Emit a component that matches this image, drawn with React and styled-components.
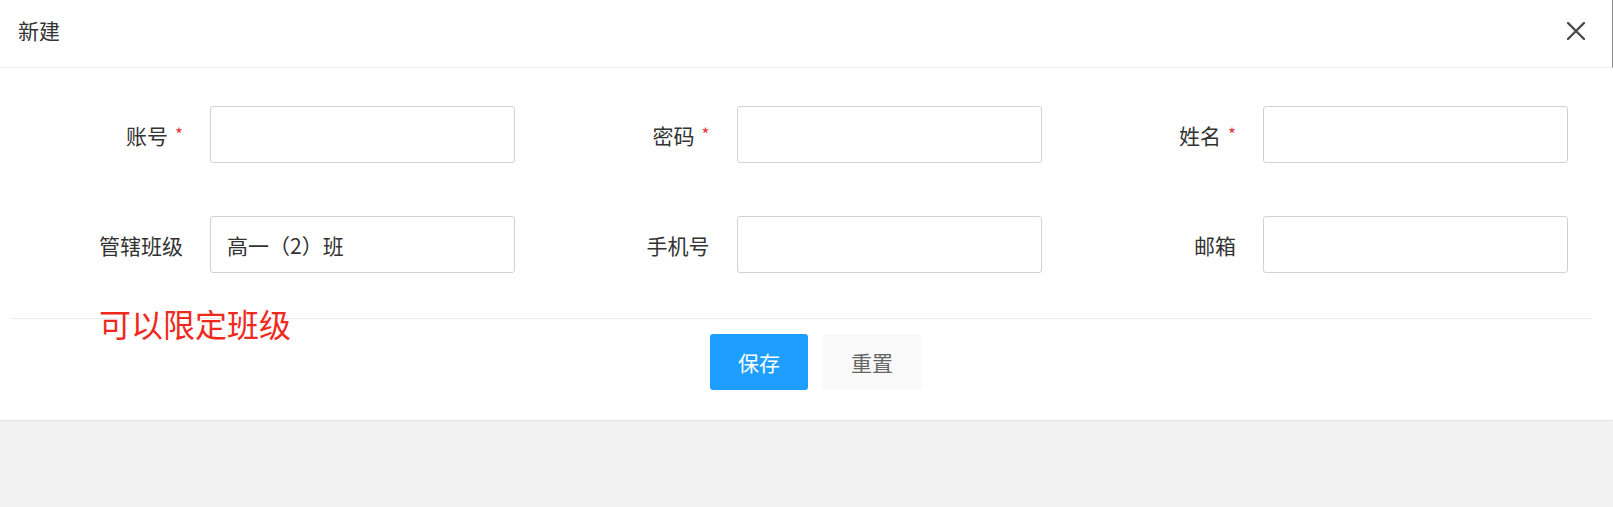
import React from "react";
import styled, { createGlobalStyle } from "styled-components";

const Global = createGlobalStyle`
  html, body { margin: 0; padding: 0; height: 100%; }
  body {
    background: #f2f2f2;
    font-family: "Noto Sans CJK SC", "Noto Sans", sans-serif;
    color: #333;
  }
  #root { min-height: 100%; }
  * { box-sizing: border-box; }
`;

const Panel = styled.div`
  position: relative;
  width: 1613px;
  background: #fff;
  border-radius: 0 0 3px 0;
  border-bottom: 1px solid #e4e4e4;
  padding-bottom: 30px;
`;

const Header = styled.div`
  display: flex;
  align-items: center;
  justify-content: space-between;
  height: 68px;
  padding: 0 26px 6px 18px;
  border-bottom: 1px solid #eee;
  border-right: 1px solid #8a8a8a;
`;

const Title = styled.div`
  font-size: 21px;
  color: #333;
  line-height: 1;
`;

const CloseButton = styled.button`
  display: flex;
  align-items: center;
  justify-content: center;
  width: 20px;
  height: 20px;
  padding: 0;
  border: 0;
  background: none;
  cursor: pointer;
`;

const Form = styled.div`
  display: grid;
  grid-template-columns: repeat(3, 1fr);
  row-gap: 53px;
  padding: 38px 15.5px 0 18px;
`;

const Field = styled.div`
  display: flex;
  align-items: center;
`;

const Label = styled.label`
  width: 165px;
  text-align: right;
  font-size: 21px;
  line-height: 56px;
  color: #333;
  margin-right: 27px;
  white-space: nowrap;
`;

const Star = styled.span`
  color: #e8353a;
  font-size: 17px;
  margin-left: 7px;
  vertical-align: 3px;
`;

const Input = styled.input`
  width: 305px;
  height: 57px;
  border: 1px solid #d2d2d2;
  border-radius: 3px;
  padding: 0 16px;
  font-family: inherit;
  font-size: 21px;
  color: #333;
  outline: none;
  background: #fff;
  text-spacing-trim: space-all;
`;

const Divider = styled.div`
  height: 1px;
  background: #ececec;
  margin: 45px 21px 0 11px;
`;

const Actions = styled.div`
  display: flex;
  justify-content: center;
  gap: 15px;
  padding-left: 18px;
  margin-top: 15px;
`;

const Button = styled.button`
  width: 98px;
  height: 56px;
  border: 0;
  border-radius: 3px;
  font-family: inherit;
  font-size: 21px;
  cursor: pointer;
  background: ${(p) => (p.$primary ? "#1e9fff" : "#f9f9f9")};
  color: ${(p) => (p.$primary ? "#fff" : "#666")};
`;

const Annotation = styled.div`
  position: absolute;
  left: 99px;
  top: 307px;
  font-size: 32px;
  line-height: 32px;
  font-weight: 400;
  color: #ee2a1f;
  white-space: nowrap;
`;

const fields = [
  { label: "账号", required: true },
  { label: "密码", required: true },
  { label: "姓名", required: true },
  { label: "管辖班级", value: "高一（2）班" },
  { label: "手机号" },
  { label: "邮箱" },
];

export default function App() {
  return (
    <>
      <Global />
      <Panel>
        <Header>
          <Title>新建</Title>
          <CloseButton aria-label="close">
            <svg width="18" height="18" viewBox="0 0 18 18">
              <path d="M1 1 L17 17 M17 1 L1 17" stroke="#4a4a4a" strokeWidth="2.4" strokeLinecap="round" />
            </svg>
          </CloseButton>
        </Header>
        <Form>
          {fields.map((f) => (
            <Field key={f.label}>
              <Label>
                {f.label}
                {f.required && <Star>*</Star>}
              </Label>
              <Input defaultValue={f.value || ""} />
            </Field>
          ))}
        </Form>
        <Divider />
        <Actions>
          <Button $primary>保存</Button>
          <Button>重置</Button>
        </Actions>
        <Annotation>可以限定班级</Annotation>
      </Panel>
    </>
  );
}
